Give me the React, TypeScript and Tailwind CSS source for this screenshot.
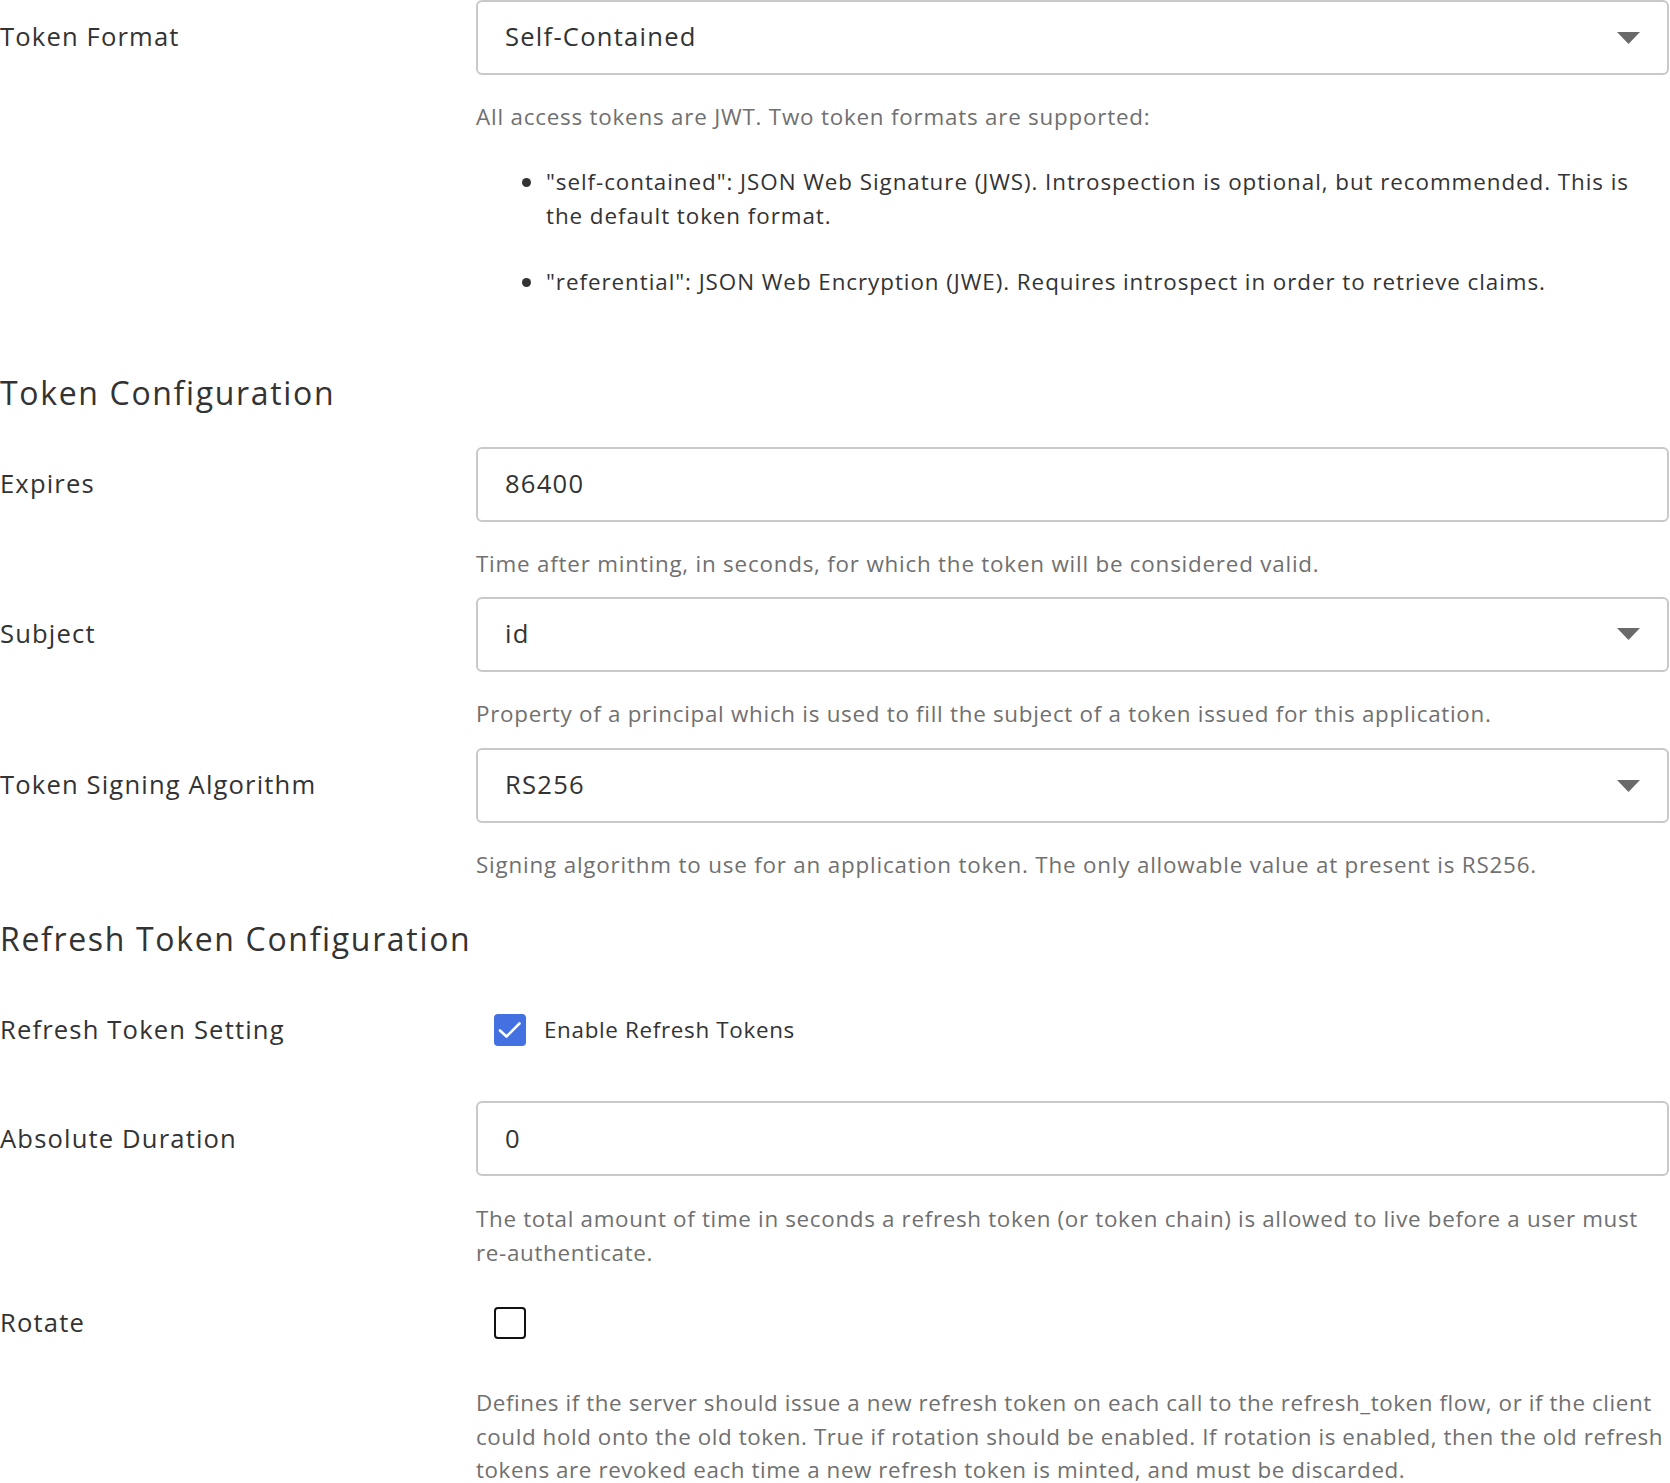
import React from "react";

const FONT = { fontFamily: '"Open Sans", "Liberation Sans", sans-serif' };

function Caret() {
  return (
    <svg width="23" height="12" viewBox="0 0 23 12" aria-hidden="true">
      <polygon points="0,0 23,0 11.5,12" fill="#6a6a6a" />
    </svg>
  );
}

function Select({ value }: { value: string }) {
  return (
    <div className="h-[75px] border-2 border-[#c9c9c9] rounded-[6px] flex items-center justify-between pl-[27px] pr-[27px] text-[25.6px] text-[#333] tracking-[0.048em]">
      <span>{value}</span>
      <Caret />
    </div>
  );
}

function Input({ value }: { value: string }) {
  return (
    <div className="h-[75px] border-2 border-[#c9c9c9] rounded-[6px] flex items-center pl-[27px] text-[25.6px] text-[#333] tracking-[0.048em]">
      {value}
    </div>
  );
}

function Desc({ children, className = "" }: { children: React.ReactNode; className?: string }) {
  return (
    <p className={`text-[22.4px] leading-[33.4px] text-[#707070] ${className}`}>{children}</p>
  );
}

function Label({ children }: { children: React.ReactNode }) {
  return (
    <div className="h-[75px] flex items-center text-[25.6px] text-[#333] tracking-[0.045em]">{children}</div>
  );
}

function Row({ label, children, className = "" }: { label: string; children: React.ReactNode; className?: string }) {
  return (
    <div className={`grid grid-cols-[476px_1fr] ${className}`}>
      <div>
        <Label>{label}</Label>
      </div>
      <div>{children}</div>
    </div>
  );
}

function Bullet({ children, className = "" }: { children: React.ReactNode; className?: string }) {
  return (
    <li className={`flex text-[22.4px] leading-[33.6px] text-[#333] tracking-[0.042em] ${className}`}>
      <span className="w-[70px] shrink-0 flex justify-end pr-[15px] pt-[13px]">
        <span className="block w-[9px] h-[9px] rounded-full bg-[#333]" />
      </span>
      <span>{children}</span>
    </li>
  );
}

function Heading({ children, className = "" }: { children: React.ReactNode; className?: string }) {
  return (
    <h2 className={`text-[32px] leading-[42px] text-[#333] tracking-[0.052em] ${className}`}>{children}</h2>
  );
}

export default function App() {
  return (
    <div className="w-full bg-white pr-px" style={FONT}>
      <Row label="Token Format">
        <Select value="Self-Contained" />
        <Desc className="mt-[25px] tracking-[0.035em]">All access tokens are JWT. Two token formats are supported:</Desc>
        <ul className="mt-[32px]">
          <Bullet>
            <>
              "self-contained": JSON Web Signature (JWS). Introspection is optional, but recommended. This is
              <br />
              the default token format.
            </>
          </Bullet>
          <Bullet className="mt-[32px]">
            "referential": JSON Web Encryption (JWE). Requires introspect in order to retrieve claims.
          </Bullet>
        </ul>
      </Row>

      <Heading className="mt-[74px]">Token Configuration</Heading>

      <Row label="Expires" className="mt-[33px]">
        <Input value="86400" />
        <Desc className="mt-[25px] tracking-[0.035em]">Time after minting, in seconds, for which the token will be considered valid.</Desc>
      </Row>

      <Row label="Subject" className="mt-[16px]">
        <Select value="id" />
        <Desc className="mt-[25px] tracking-[0.032em]">Property of a principal which is used to fill the subject of a token issued for this application.</Desc>
      </Row>

      <Row label="Token Signing Algorithm" className="mt-[18px]">
        <Select value="RS256" />
        <Desc className="mt-[25px] tracking-[0.036em]">Signing algorithm to use for an application token. The only allowable value at present is RS256.</Desc>
      </Row>

      <Heading className="mt-[37px]">Refresh Token Configuration</Heading>

      <Row label="Refresh Token Setting" className="mt-[32px]">
        <div className="h-[75px] flex items-center pl-[18px]">
          <span className="w-[32px] h-[32px] rounded-[4px] bg-[#4371e1] flex items-center justify-center">
            <svg width="32" height="32" viewBox="0 0 32 32" aria-hidden="true">
              <path d="M6 16.5 L12.5 22.5 L25.5 9.5" fill="none" stroke="#fff" strokeWidth="2.6" strokeLinecap="round" strokeLinejoin="round" />
            </svg>
          </span>
          <span className="ml-[18px] text-[22.4px] text-[#333] tracking-[0.03em]">Enable Refresh Tokens</span>
        </div>
      </Row>

      <Row label="Absolute Duration" className="mt-[34px]">
        <Input value="0" />
        <Desc className="mt-[26px] tracking-[0.03em]">
          The total amount of time in seconds a refresh token (or token chain) is allowed to live before a user must re-authenticate.
        </Desc>
      </Row>

      <Row label="Rotate" className="mt-[16px]">
        <div className="h-[75px] flex items-center pl-[18px]">
          <span className="w-[32px] h-[32px] rounded-[4px] border-2 border-[#111] bg-white" />
        </div>
        <Desc className="mt-[26px] tracking-[0.026em]">
          Defines if the server should issue a new refresh token on each call to the refresh_token flow, or if the client
          <br />
          could hold onto the old token. True if rotation should be enabled. If rotation is enabled, then the old refresh
          <br />
          tokens are revoked each time a new refresh token is minted, and must be discarded.
        </Desc>
      </Row>
    </div>
  );
}
